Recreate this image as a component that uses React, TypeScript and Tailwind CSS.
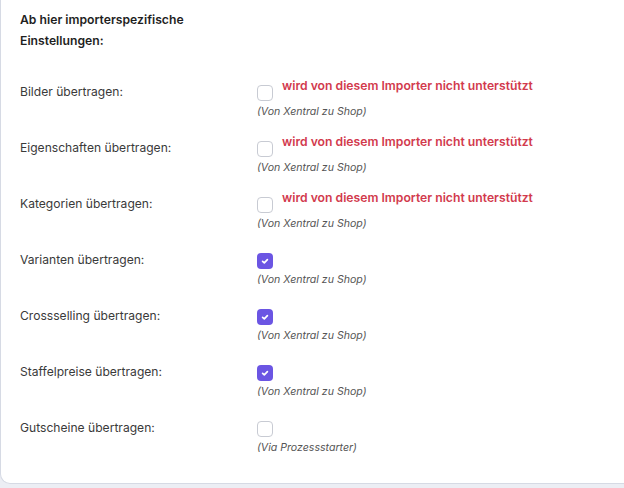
import React from "react";

type Row = { label: string; checked: boolean; unsupported?: boolean; note: string };

const rows: Row[] = [
  { label: "Bilder übertragen:", checked: false, unsupported: true, note: "(Von Xentral zu Shop)" },
  { label: "Eigenschaften übertragen:", checked: false, unsupported: true, note: "(Von Xentral zu Shop)" },
  { label: "Kategorien übertragen:", checked: false, unsupported: true, note: "(Von Xentral zu Shop)" },
  { label: "Varianten übertragen:", checked: true, note: "(Von Xentral zu Shop)" },
  { label: "Crossselling übertragen:", checked: true, note: "(Von Xentral zu Shop)" },
  { label: "Staffelpreise übertragen:", checked: true, note: "(Von Xentral zu Shop)" },
  { label: "Gutscheine übertragen:", checked: false, note: "(Via Prozessstarter)" },
];

function Box({ checked }: { checked: boolean }) {
  if (checked) {
    return (
      <div className="mt-[3px] flex h-4 w-4 shrink-0 items-center justify-center rounded-[4px] bg-[#6b55e3]">
        <svg width="10" height="10" viewBox="0 0 10 10" fill="none">
          <path d="M2.6 5.3 L4.3 6.8 L7.4 3.6" stroke="white" strokeWidth="1.7" strokeLinecap="round" strokeLinejoin="round" />
        </svg>
      </div>
    );
  }
  return <div className="mt-[3px] h-4 w-4 shrink-0 rounded-[4px] border border-[#c8cbd3] bg-white" />;
}

export default function App() {
  return (
    <div className="h-[488px] w-[624px] overflow-hidden bg-[#eceef4]" style={{ fontFamily: "Inter, 'Noto Sans', sans-serif" }}>
      <div className="h-[484px] w-[660px] rounded-bl-[10px] border-b border-l border-[#d6dae4] bg-white pl-[19px] pt-[9px]">
        <div className="text-[12.2px] font-semibold leading-[21px] text-[#1f1f1f]">
          Ab hier importerspezifische
          <br />
          Einstellungen:
        </div>
        <div className="mt-[31px] flex flex-col">
          {rows.map((r) => (
            <div key={r.label} className="flex h-[56px]">
              <div className="w-[237px] text-[12.1px] leading-5 text-[#3a3a3a]">{r.label}</div>
              <div className="flex flex-col">
                <div className="flex items-start gap-[9px]">
                  <Box checked={r.checked} />
                  {r.unsupported && (
                    <span className="-mt-[5px] text-[12.2px] font-semibold leading-[18px] text-[#d23a4d]">
                      wird von diesem Importer nicht unterstützt
                    </span>
                  )}
                </div>
                <div className="mt-[3px] text-[10.6px] italic leading-4 text-[#555555]">{r.note}</div>
              </div>
            </div>
          ))}
        </div>
      </div>
    </div>
  );
}
